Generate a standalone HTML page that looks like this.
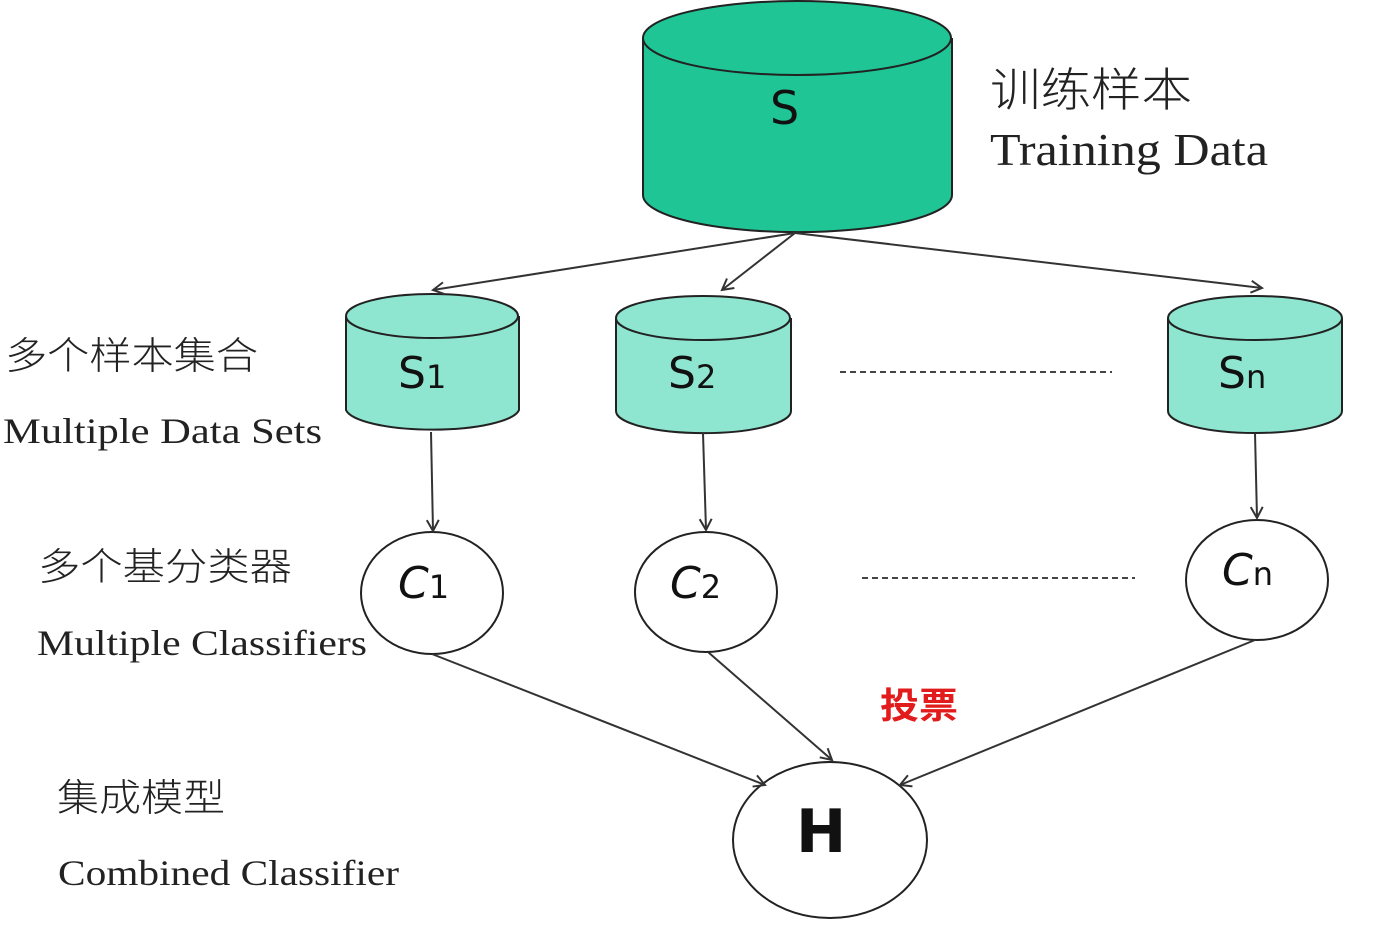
<!DOCTYPE html><html><head><meta charset="utf-8"><style>body{margin:0;background:#fff}svg{display:block}</style></head><body>
<svg width="1393" height="931" xmlns="http://www.w3.org/2000/svg">
<defs><marker id="a" markerWidth="14" markerHeight="14" refX="12" refY="7" orient="auto" markerUnits="userSpaceOnUse"><path d="M1,1 L12,7 L1,13" fill="none" stroke="#333" stroke-width="2"/></marker></defs>
<g stroke="#222" stroke-width="2">
<path d="M643,38 L643,195 A154,37 0 0 0 952,195 L952,38" fill="#1fc595"/>
<ellipse cx="797" cy="38" rx="154" ry="37" fill="#1fc595"/>
<g fill="#8fe6d0">
<path d="M346,316 L346,410 A87,22 0 0 0 519,410 L519,316"/><ellipse cx="432" cy="316" rx="86" ry="22"/>
<path d="M616,318 L616,411 A87,22 0 0 0 791,411 L791,318"/><ellipse cx="703" cy="318" rx="87" ry="22"/>
<path d="M1168,318 L1168,411 A87,22 0 0 0 1342,411 L1342,318"/><ellipse cx="1255" cy="318" rx="87" ry="22"/>
</g>
<g fill="#fff"><ellipse cx="432" cy="593" rx="71" ry="61"/><ellipse cx="706" cy="592" rx="71" ry="60"/><ellipse cx="1257" cy="580" rx="71" ry="60"/><ellipse cx="830" cy="840" rx="97" ry="78"/></g>
</g>
<g stroke="#333" stroke-width="2" fill="none" marker-end="url(#a)">
<line x1="795" y1="233" x2="433" y2="290"/><line x1="795" y1="233" x2="722" y2="290"/><line x1="795" y1="233" x2="1262" y2="288"/>
<line x1="431" y1="432" x2="433" y2="531"/><line x1="703" y1="433" x2="706" y2="530"/><line x1="1255" y1="433" x2="1257" y2="518"/>
<line x1="432" y1="654" x2="765" y2="785"/><line x1="708" y1="652" x2="832" y2="760"/><line x1="1255" y1="640" x2="900" y2="785"/>
</g>
<g stroke="#444" stroke-width="2" stroke-dasharray="6,4"><line x1="840" y1="372" x2="1112" y2="372"/><line x1="862" y1="578" x2="1135" y2="578"/></g>
<g font-family="'DejaVu Sans','Liberation Sans',sans-serif" fill="#111">
<text x="770" y="124" font-size="46">S</text>
<text x="398" y="388" font-size="44">S<tspan font-size="32">1</tspan></text>
<text x="668" y="388" font-size="44">S<tspan font-size="32">2</tspan></text>
<text x="1218" y="388" font-size="44">S<tspan font-size="32">n</tspan></text>
<text x="398" y="598" font-size="44" font-style="italic">C<tspan font-size="32" font-style="normal">1</tspan></text>
<text x="670" y="598" font-size="44" font-style="italic">C<tspan font-size="32" font-style="normal">2</tspan></text>
<text x="1222" y="585" font-size="44" font-style="italic">C<tspan font-size="32" font-style="normal">n</tspan></text>
<text x="796" y="852" font-size="60" font-weight="bold">H</text>
</g>
<g font-family="'Liberation Serif','Noto Serif CJK SC',serif" fill="#222" lengthAdjust="spacingAndGlyphs">
<text x="990" y="106" font-size="46" font-family="'Noto Sans CJK SC',sans-serif" font-weight="300" textLength="202" lengthAdjust="spacingAndGlyphs">训练样本</text>
<text x="990" y="165" font-size="46" textLength="278" lengthAdjust="spacingAndGlyphs">Training Data</text>
<text x="5" y="369" font-size="38" font-family="'Noto Sans CJK SC',sans-serif" font-weight="300" textLength="253" lengthAdjust="spacingAndGlyphs">多个样本集合</text>
<text x="3" y="443" font-size="36" textLength="319" lengthAdjust="spacingAndGlyphs">Multiple  Data Sets</text>
<text x="38" y="580" font-size="38" font-family="'Noto Sans CJK SC',sans-serif" font-weight="300" textLength="254" lengthAdjust="spacingAndGlyphs">多个基分类器</text>
<text x="37" y="655" font-size="36" textLength="330" lengthAdjust="spacingAndGlyphs">Multiple  Classifiers</text>
<text x="57" y="811" font-size="38" font-family="'Noto Sans CJK SC',sans-serif" font-weight="300" textLength="168" lengthAdjust="spacingAndGlyphs">集成模型</text>
<text x="58" y="885" font-size="36" textLength="341" lengthAdjust="spacingAndGlyphs">Combined Classifier</text>
<text x="880" y="718" font-size="36" fill="#e21c1c" font-weight="bold" font-family="'Noto Sans CJK SC',sans-serif" textLength="78" lengthAdjust="spacingAndGlyphs">投票</text>
</g>
</svg>
</body></html>
